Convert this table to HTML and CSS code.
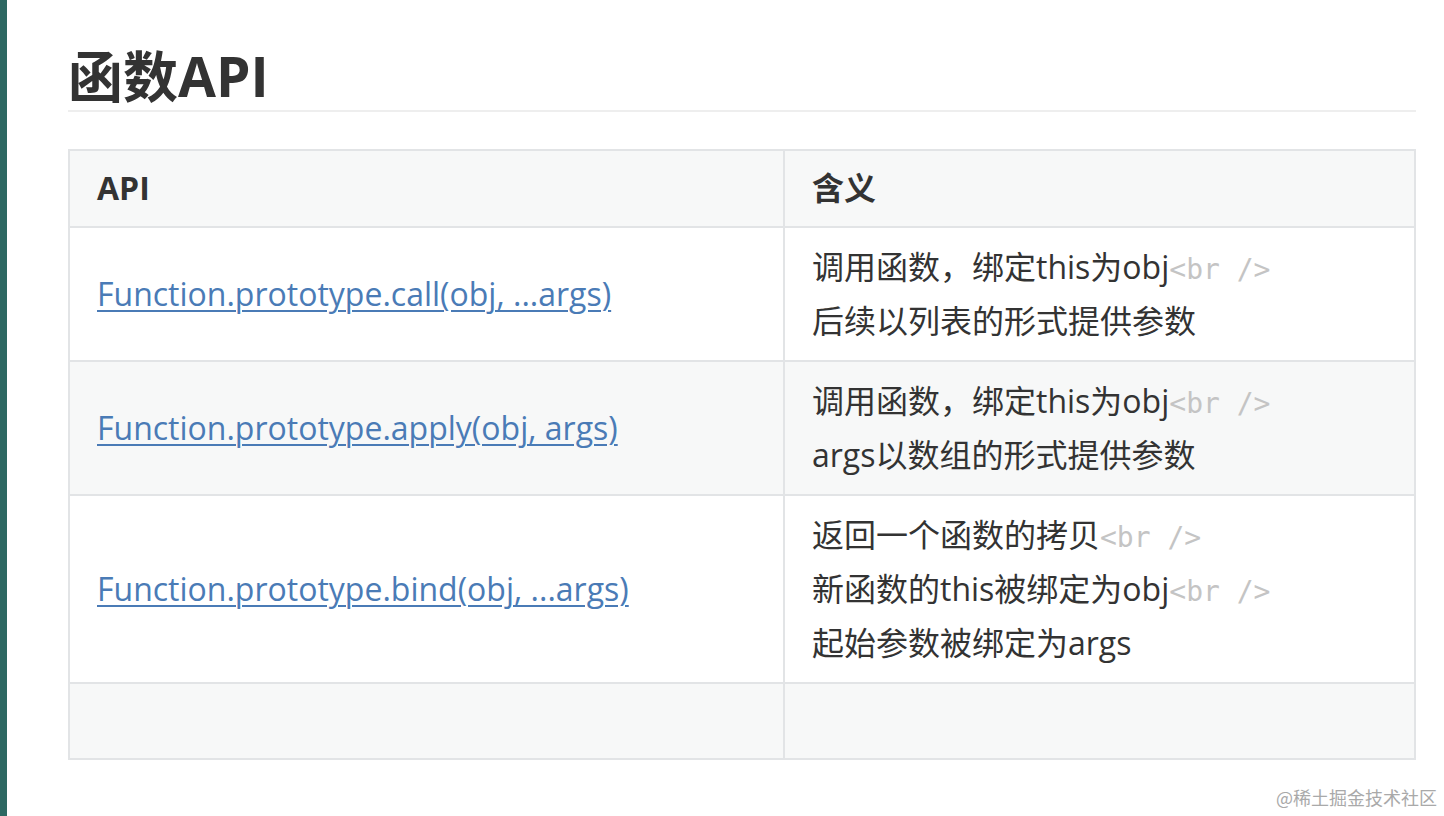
FILE: index.html
```html
<!DOCTYPE html>
<html lang="zh">
<head>
<meta charset="utf-8">
<link rel="stylesheet" href="styles.css">
</head>
<body>
<div class="page">
  <div class="strip"></div>
  <main class="content">
    <h1 class="title">函数API</h1>
    <table class="api-table">
      <thead>
        <tr><th class="col-api">API</th><th>含义</th></tr>
      </thead>
      <tbody>
        <tr>
          <td><a href="#">Function.prototype.call(obj, ...args)</a></td>
          <td>调用函数，绑定this为obj<code class="tag">&lt;br /&gt;</code><br>后续以列表的形式提供参数</td>
        </tr>
        <tr class="alt">
          <td><a href="#">Function.prototype.apply(obj, args)</a></td>
          <td>调用函数，绑定this为obj<code class="tag">&lt;br /&gt;</code><br>args以数组的形式提供参数</td>
        </tr>
        <tr>
          <td><a href="#">Function.prototype.bind(obj, ...args)</a></td>
          <td>返回一个函数的拷贝<code class="tag">&lt;br /&gt;</code><br>新函数的this被绑定为obj<code class="tag">&lt;br /&gt;</code><br>起始参数被绑定为args</td>
        </tr>
        <tr class="alt empty">
          <td></td>
          <td></td>
        </tr>
      </tbody>
    </table>
  </main>
  <div class="watermark">@稀土掘金技术社区</div>
</div>
</body>
</html>
```
FILE: styles.css
```css
html, body {
  margin: 0;
  padding: 0;
  background: #fff;
}
body {
  font-family: "Open Sans", "Noto Sans CJK SC", sans-serif;
  color: #333;
}
.page {
  display: flex;
  width: 1444px;
  height: 816px;
  overflow: hidden;
  position: relative;
}
.strip {
  width: 7px;
  flex: 0 0 7px;
  background: #2d6862;
}
.content {
  padding: 42px 28px 0 61px;
  flex: 1;
}
.title {
  margin: 0;
  font-family: "Open Sans", "Noto Sans CJK SC", sans-serif;
  font-size: 55px;
  font-weight: 700;
  line-height: 68px;
  color: #333;
  padding-bottom: 0;
  border-bottom: 2px solid #eeeeee;
  width: 1348px;
}
.api-table {
  margin-top: 37px;
  border-collapse: collapse;
  width: 1348px;
  font-size: 32px;
  line-height: 54px;
}
.api-table th, .api-table td {
  border: 2px solid #e2e4e6;
  padding: 12px 27px;
  text-align: left;
  vertical-align: middle;
}
.api-table th {
  font-weight: 700;
  background: #f7f8f8;
  padding-top: 10px;
  padding-bottom: 11px;
}
.col-api {
  width: 659px;
}
.api-table tr.alt td {
  background: #f7f8f8;
}
.api-table tr.empty td {
  height: 54px;
  padding-top: 10px;
  padding-bottom: 10px;
}
.api-table a {
  color: #4a7bb6;
  text-decoration: underline;
  text-underline-offset: 4px;
  text-decoration-thickness: 2px;
}
.tag {
  font-family: "DejaVu Sans Mono", monospace;
  color: #c4c4c4;
  font-size: 28px;
  line-height: 1;
}
.watermark {
  position: absolute;
  right: 7px;
  bottom: 6px;
  font-family: "Noto Sans CJK SC", sans-serif;
  font-size: 18px;
  color: #a9a9a9;
}
```
